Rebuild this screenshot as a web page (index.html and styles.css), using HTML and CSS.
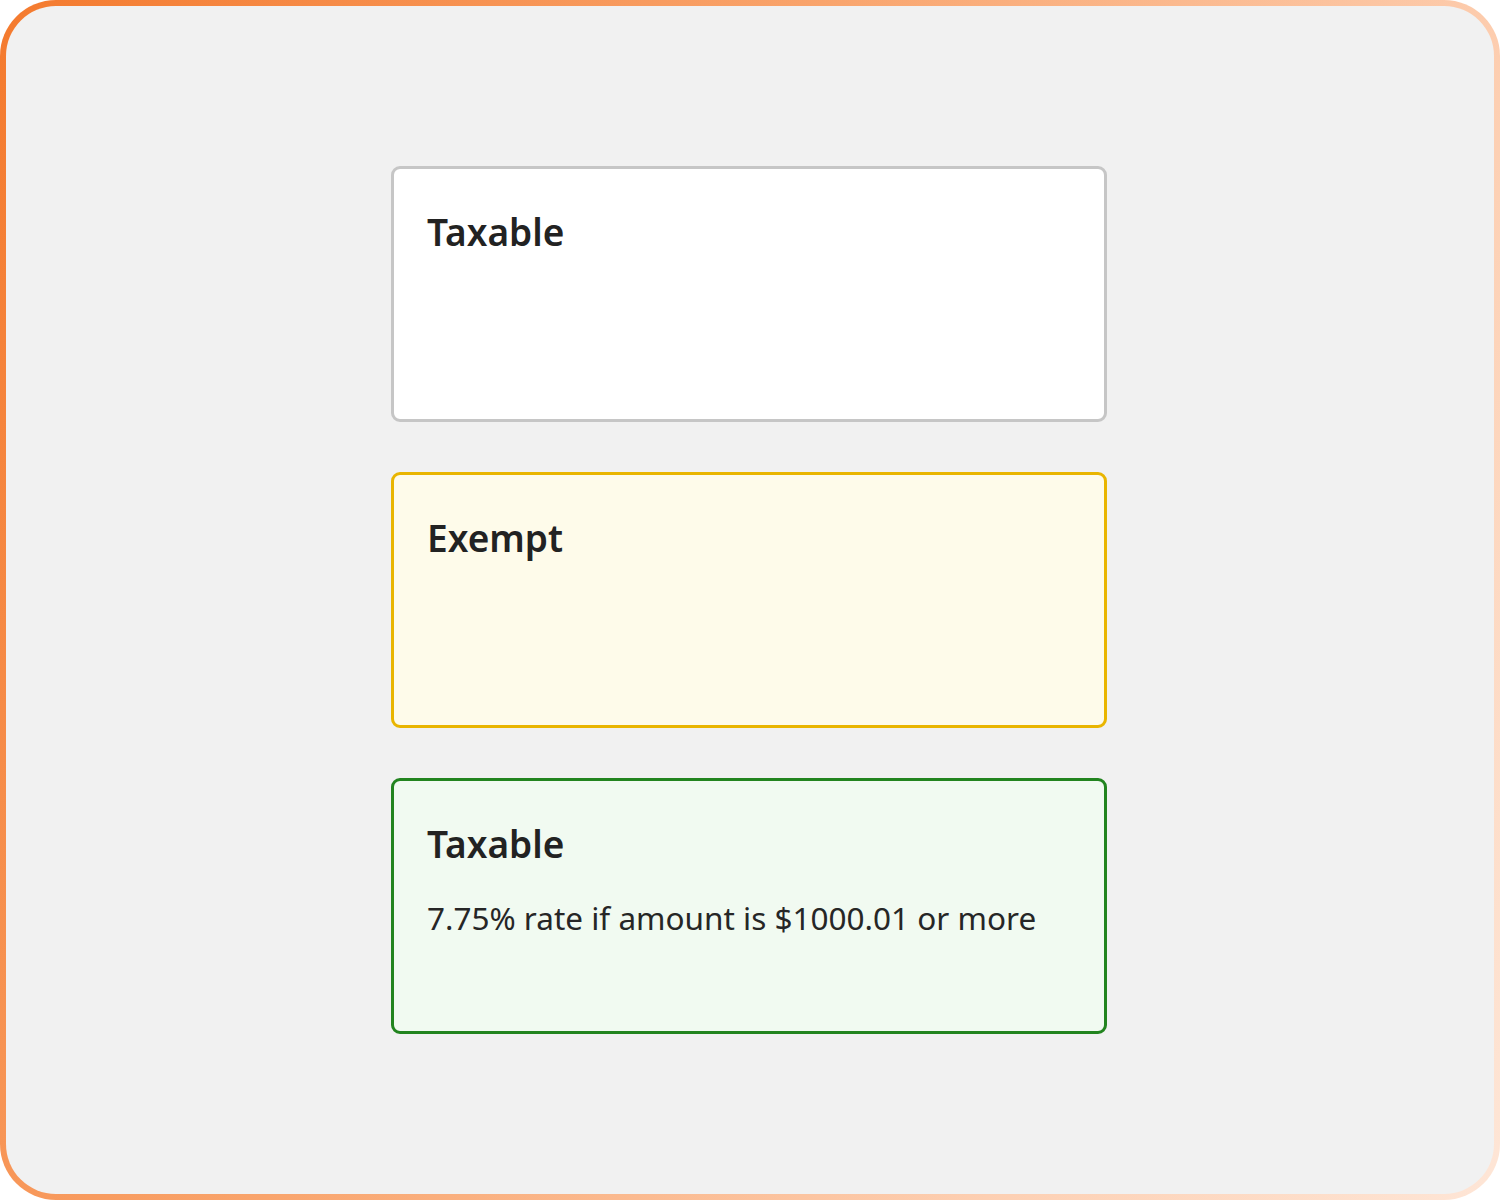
FILE: index.html
```html
<!DOCTYPE html>
<html lang="en">
<head>
<meta charset="utf-8">
<title>Tax status cards</title>
<link rel="stylesheet" href="styles.css">
</head>
<body>
<div class="frame">
  <div class="canvas">
    <div class="stack">
      <div class="card card-default">
        <div class="card-title">Taxable</div>
      </div>
      <div class="card card-warning">
        <div class="card-title">Exempt</div>
      </div>
      <div class="card card-success">
        <div class="card-title">Taxable</div>
        <div class="card-text">7.75% rate if amount is $1000.01 or more</div>
      </div>
    </div>
  </div>
</div>
</body>
</html>
```
FILE: styles.css
```css
html, body {
  margin: 0;
  padding: 0;
  background: #ffffff;
}
body {
  font-family: "Noto Sans", "Open Sans", sans-serif;
  color: #222222;
}
.frame {
  width: 1500px;
  height: 1200px;
  box-sizing: border-box;
  padding: 6px;
  border-radius: 56px;
  background: linear-gradient(115deg, #f47a2e 0%, #f9a46c 40%, #fdcfb2 75%, #fee6d7 100%);
}
.canvas {
  width: 100%;
  height: 100%;
  box-sizing: border-box;
  border-radius: 50px;
  background: #f1f1f1;
  padding: 160px 0 0 385px;
}
.stack {
  display: flex;
  flex-direction: column;
  gap: 50px;
  width: 716px;
}
.card {
  box-sizing: border-box;
  height: 256px;
  border: 3px solid #c6c6c6;
  border-radius: 9px;
  background: #ffffff;
  padding: 39px 33px 0 33px;
}
.card-warning {
  border-color: #e9b500;
  background: #fefbea;
}
.card-success {
  border-color: #22841f;
  background: #f1faf1;
}
.card-title {
  font-size: 37px;
  font-weight: 600;
  line-height: 48px;
  color: #222222;
}
.card-text {
  margin-top: 30px;
  font-size: 31.5px;
  line-height: 40px;
  color: #262626;
}
```
